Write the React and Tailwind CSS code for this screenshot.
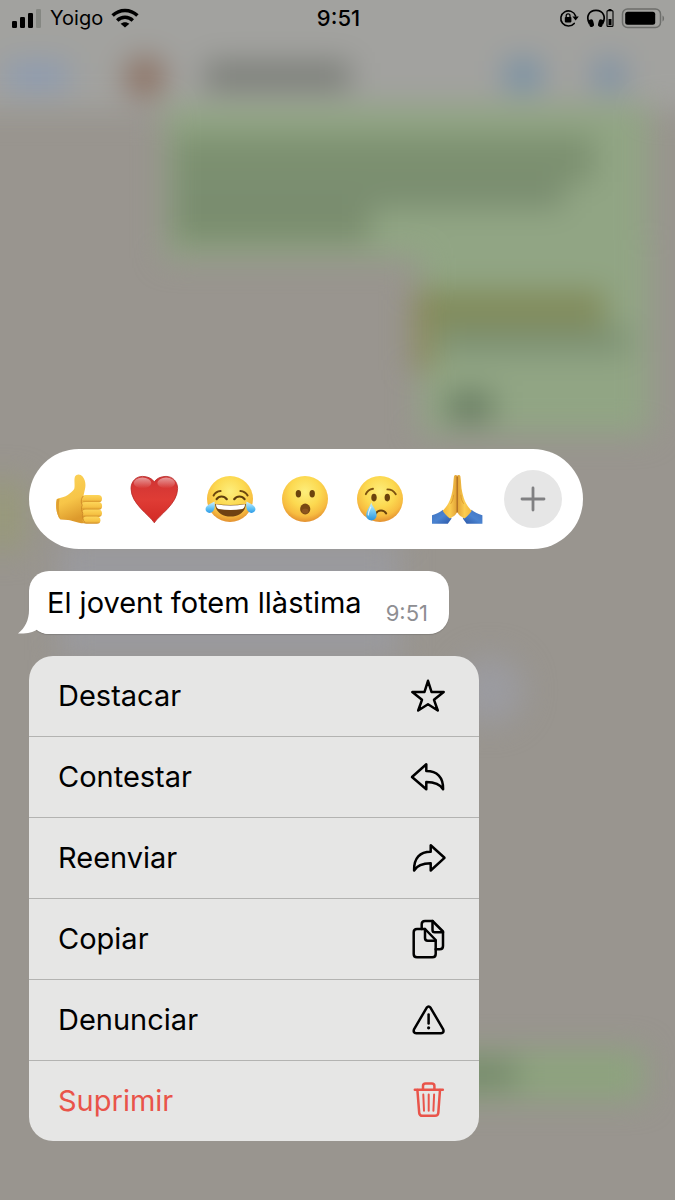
import React from 'react'

const line = {
  fill: 'none',
  stroke: 'currentColor',
  strokeWidth: 2.5,
  strokeLinecap: 'round',
  strokeLinejoin: 'round'
}

function MenuIcon({children}) {
  return <svg viewBox="0 0 40 40" className="h-10 w-10 shrink-0" aria-hidden="true" {...line}>{children}</svg>
}

const actions = [
  {
    label: 'Destacar',
    icon: <path d="M20 4.8L23.5 15.9L35.7 16L26 23.8L29.8 34.5L20 28.3L10.200 34.5L14 23.8L4.300 16L16.5 15.9Z" />
  },
  {
    label: 'Contestar',
    icon: <path d="M4 20L18.3 7.3V14C29 14 35.4 20 35.1 32.3C32 27 27 25 18.3 25V32.3Z" />
  },
  {
    label: 'Reenviar',
    icon: <path d="M36.5 19.8L22.7 7.3V13.8C12 13.8 5.8 20 6.100 32.5C9 27.5 14 25.3 22.7 25.3V32.5Z" />
  },
  {
    label: 'Copiar',
    icon: <>
      <path d="M17 10H9Q5.7 10 5.7 13.3V35Q5.7 38.3 9 38.3H24.4Q27.7 38.3 27.7 35V21Z" />
      <path d="M17 10V19Q17 21.7 19.7 21.7H27.7" />
      <path d="M13.7 10V5.3Q13.7 2 17 2H24.5L35 12.5V27Q35 30.3 31.7 30.3H27.7" />
      <path d="M24.5 2V11Q24.5 13.3 26.8 13.3H35" />
    </>
  },
  {
    label: 'Denunciar',
    icon: <>
      <path d="M18.6 7.8Q20.6 5 22.6 7.8L35.2 29.4Q36.4 33 33 33.2H8.2Q4.8 33 6 29.4Z" />
      <path d="M20.6 14.5V23.5" />
      <circle cx="20.6" cy="27.8" r="1.6" fill="currentColor" stroke="none" />
    </>
  },
  {
    label: 'Suprimir',
    danger: true,
    icon: <>
      <path d="M6.8 8.8H34.8" />
      <path d="M15 8.6V5Q15 2.6 17.6 2.6H23.8Q26.4 2.6 26.4 5V8.6" />
      <path d="M9.4 9L11.2 31.8Q11.5 34.8 14.5 34.8H27Q30 34.8 30.3 31.8L32 9" />
      <path d="M15.3 13.6L16 29.8M20.7 13.6V29.8M26.1 13.6L25.4 29.8" strokeWidth="2" />
    </>
  }
]

function FaceGradient({id}) {
  return <radialGradient id={id} cx="0.5" cy="0.34" r="0.66">
    <stop offset="0" stopColor="#fdee7c" />
    <stop offset="0.5" stopColor="#fcd950" />
    <stop offset="0.8" stopColor="#f7bc40" />
    <stop offset="1" stopColor="#e39030" />
  </radialGradient>
}

function Face({id, children}) {
  return <>
    <defs><FaceGradient id={id} /></defs>
    <circle cx="27" cy="27" r="23" fill={`url(#${id})`} />
    {children}
  </>
}

function ThumbsUp() {
  return <>
    <defs>
      <linearGradient id="thumb" x1="0" y1="0" x2="0.3" y2="1">
        <stop offset="0" stopColor="#fcd45a" />
        <stop offset="0.6" stopColor="#f7c548" />
        <stop offset="1" stopColor="#dd9a2c" />
      </linearGradient>
      <linearGradient id="finger" x1="0" y1="0" x2="0" y2="1">
        <stop offset="0" stopColor="#fdd65a" />
        <stop offset="0.65" stopColor="#f6c143" />
        <stop offset="1" stopColor="#cf8a24" />
      </linearGradient>
    </defs>
    <path d="M23 4.5C24.5 1.8 28.5 1.8 30.6 4.500C33.400 8 34 12.5 33 17L31.5 23.5L37 26V50L31.5 51.3C25 51 21 48.3 16 47.9L8.5 47.6C4.6 43.5 3.2 34 4.8 27.2C6 25.3 12 26.5 18 21.2C20 19.4 22 18 22.4 16.2C23 12 21.800 7.5 23 4.5Z" fill="url(#thumb)" />
    <path d="M4.8 27.2C3.2 34 4.6 43.5 8.5 47.6C6.8 41 6.4 33 7.5 26.7Z" fill="#e0a030" />
    <rect x="30" y="23" width="20" height="7.6" rx="3.8" fill="url(#finger)" />
    <rect x="29.5" y="30" width="20.6" height="7.9" rx="3.9" fill="url(#finger)" />
    <rect x="30" y="37.4" width="20" height="7.7" rx="3.8" fill="url(#finger)" />
    <rect x="30.8" y="44.6" width="17.6" height="7.2" rx="3.6" fill="url(#finger)" />
    <path d="M31.3 24C28.6 27 29 31 30.2 33C29 36 29.4 39 30.8 41C30 44 30.6 48 33 50.8" fill="none" stroke="#d08c28" strokeWidth="1" />
  </>
}

function Heart() {
  return <>
    <defs>
      <linearGradient id="heart" x1="0" y1="0" x2="0" y2="1">
        <stop offset="0" stopColor="#cf3434" />
        <stop offset="0.5" stopColor="#df3c35" />
        <stop offset="1" stopColor="#d22a25" />
      </linearGradient>
      <linearGradient id="shine" x1="0" y1="0" x2="0" y2="1">
        <stop offset="0" stopColor="#ffffff" stopOpacity="0.5" />
        <stop offset="1" stopColor="#ffffff" stopOpacity="0" />
      </linearGradient>
    </defs>
    <path d="M27.300 50.8C23 43.5 4 32 4 16.5C4 9.500 9 4.400 15.500 4.400C20.800 4.400 25.300 6.500 27.300 10C29.300 6.500 33.800 4.400 39 4.400C45.600 4.400 50.600 9.500 50.600 16.500C50.600 32 31.600 43.500 27.300 50.800Z" fill="url(#heart)" stroke="#b82724" strokeWidth="0.8" />
    <ellipse cx="15.5" cy="11" rx="8.8" ry="5.4" fill="url(#shine)" />
    <ellipse cx="39.2" cy="11" rx="8.8" ry="5.4" fill="url(#shine)" />
  </>
}

function Joy() {
  return <>
    <defs>
      <linearGradient id="joyTear" x1="0" y1="0" x2="0" y2="1">
        <stop offset="0" stopColor="#d6f3ff" />
        <stop offset="0.6" stopColor="#62c3f5" />
        <stop offset="1" stopColor="#2f9be6" />
      </linearGradient>
    </defs>
    <Face id="joy">
      <path d="M13.6 27.2C16 23.6 21 23.6 23.8 27.2M31.2 27.2C34 23.6 39 23.6 41.6 27.2" fill="none" stroke="#5f3d0d" strokeWidth="2.2" strokeLinecap="round" />
      <path d="M10.6 23.500C12 20.8 14.800 19.200 17.6 19M37.4 19C40.2 19.200 43 20.800 44.600 23.500" fill="none" stroke="#6f480e" strokeWidth="2" strokeLinecap="round" />
      <path d="M12.2 32Q27.5 34.2 42.8 32C42.5 39.5 36.5 44.600 27.5 44.600C18.5 44.600 12.6 39.500 12.2 32Z" fill="#6f4212" />
      <path d="M13 32.2Q27.5 34.6 42 32.2C42 34.5 41.2 36.2 39.4 37Q27.5 38.800 15.6 37C13.8 36.2 13 34.5 13 32.2Z" fill="#fff" />
    </Face>
    <path d="M11.5 29.4C11.9 33 12.4 38 8.6 40.3C5.8 42 2.2 40 2.6 36.8C3 33 8 31.5 11.5 29.4Z" fill="url(#joyTear)" />
    <path d="M43.5 29.4C43.1 33 42.6 38 46.4 40.3C49.2 42 52.8 40 52.4 36.8C52 33 47 31.5 43.5 29.4Z" fill="url(#joyTear)" />
  </>
}

function Surprised() {
  return <Face id="surprised">
    <ellipse cx="20.4" cy="21.8" rx="2.7" ry="3.7" fill="#6b430c" />
    <ellipse cx="34.2" cy="21.8" rx="2.7" ry="3.7" fill="#6b430c" />
    <ellipse cx="27.2" cy="37" rx="5.1" ry="5.4" fill="#794812" />
    <ellipse cx="27.2" cy="39" rx="3.2" ry="2.6" fill="#8d5520" />
  </Face>
}

function Crying() {
  return <>
    <defs>
      <linearGradient id="cryTear" x1="0" y1="0" x2="0" y2="1">
        <stop offset="0" stopColor="#c9efff" />
        <stop offset="0.5" stopColor="#72c9f4" />
        <stop offset="1" stopColor="#2b93dd" />
      </linearGradient>
    </defs>
    <Face id="crying">
      <ellipse cx="21" cy="25.6" rx="2.7" ry="3.8" fill="#6b430c" />
      <ellipse cx="34.3" cy="25.6" rx="2.7" ry="3.8" fill="#6b430c" />
      <path d="M12.8 22.2C14 19.4 16.6 17.3 20 16.8M34.4 17.4C38.2 17.4 41 19.2 42.8 22.2" fill="none" stroke="#7d5210" strokeWidth="1.9" strokeLinecap="round" />
      <path d="M23 41.4C25 37.4 31 37.4 33.2 41.4" fill="none" stroke="#6b430c" strokeWidth="2" strokeLinecap="round" />
    </Face>
    <path d="M18.2 30.6C19.6 35 23.6 38.4 23.6 43C23.6 46.2 21.2 48.4 18.4 48.4C15.6 48.4 13.2 46.2 13.2 43C13.2 38.4 17 35 18.2 30.6Z" fill="url(#cryTear)" />
    <path d="M17.8 35C16.4 38 15 40.4 15.4 43" fill="none" stroke="#fff" strokeWidth="1.2" strokeLinecap="round" opacity="0.75" />
  </>
}

function PrayingHalf() {
  return <>
    <path d="M3 43.2C7 42 11 40.4 14 37.8L22.6 46.4L18.8 51.8H3Z" fill="url(#sleeve)" />
    <path d="M28.2 3.8C27.6 2.6 25.6 2.6 25 4.2C24.2 9 24.4 15 23.2 20C22 25 21.2 28 19.4 31.2C17.6 34.6 15.8 36.6 13.6 38.8C15.6 41.8 18.4 44.8 21 46.6C23 45 26.4 44 28.2 40Z" fill="url(#palm)" />
    <path d="M24.6 22.8C24.4 26.8 23.4 29.4 21.6 31.8" fill="none" stroke="#dd9b2c" strokeWidth="0.9" />
  </>
}

function Praying() {
  return <>
    <defs>
      <linearGradient id="palm" x1="0" y1="0" x2="1" y2="0">
        <stop offset="0" stopColor="#f3b63a" />
        <stop offset="0.5" stopColor="#fbcd50" />
        <stop offset="1" stopColor="#e0a035" />
      </linearGradient>
      <linearGradient id="sleeve" x1="0" y1="0" x2="1" y2="1">
        <stop offset="0" stopColor="#3f72c0" />
        <stop offset="0.500" stopColor="#4a83d0" />
        <stop offset="1" stopColor="#2b57a8" />
      </linearGradient>
    </defs>
    <PrayingHalf />
    <g transform="translate(56.4 0) scale(-1 1)"><PrayingHalf /></g>
    <path d="M28.2 4.5V40.5" stroke="#a8651c" strokeWidth="1.2" />
  </>
}

const reactions = [
  {name: 'M’agrada', drawing: <ThumbsUp />},
  {name: 'Cor', drawing: <Heart />},
  {name: 'Riure', drawing: <Joy />},
  {name: 'Sorpresa', drawing: <Surprised />},
  {name: 'Plor', drawing: <Crying />},
  {name: 'Gràcies', drawing: <Praying />}
]

// the dimmed, out of focus conversation behind the menu
function Backdrop() {
  return <svg className="absolute inset-0 -z-10 h-full w-full" viewBox="0 0 675 1200" preserveAspectRatio="none" aria-hidden="true">
    <defs>
      <filter id="soft" x="-20%" y="-20%" width="140%" height="140%" colorInterpolationFilters="sRGB">
        <feGaussianBlur stdDeviation="15" />
      </filter>
    </defs>
    <rect width="675" height="1200" fill="#99958f" />
    <g filter="url(#soft)">
      <rect x="-60" y="-60" width="795" height="170" fill="#a2a29f" />
      <rect x="165" y="104" width="484" height="154" fill="#91a584" />
      <rect x="420" y="240" width="230" height="194" fill="#91a584" />
      <rect x="174" y="136" width="420" height="46" fill="#7c9070" />
      <rect x="174" y="180" width="390" height="28" fill="#7a8d70" />
      <rect x="174" y="206" width="196" height="36" fill="#7a8d6e" />
      <rect x="414" y="290" width="20" height="80" fill="#8a8a58" />
      <rect x="430" y="290" width="175" height="38" fill="#828c5c" />
      <rect x="440" y="328" width="190" height="26" fill="#7d9174" />
      <rect x="448" y="392" width="44" height="30" fill="#687c62" />
      <rect x="5" y="62" width="64" height="28" fill="#8c9bb2" />
      <circle cx="145" cy="77" r="20" fill="#8c6f60" />
      <rect x="205" y="62" width="145" height="28" fill="#7a7d77" />
      <rect x="505" y="60" width="36" height="30" fill="#7590a6" />
      <rect x="594" y="60" width="30" height="30" fill="#7a90a6" />
      <rect x="-20" y="480" width="46" height="70" fill="#98997b" />
      <rect x="60" y="540" width="340" height="120" fill="#9a9a9e" />
      <circle cx="490" cy="690" r="34" fill="#9b9ba0" />
      <rect x="400" y="1050" width="244" height="50" fill="#8da37e" />
      <rect x="440" y="1060" width="76" height="28" fill="#74896a" />
    </g>
  </svg>
}

function StatusBar() {
  return <header className="grid h-9 grid-cols-[1fr_auto_1fr] items-center pl-3 pr-[10px]">
    <div className="flex items-center gap-2">
      <svg viewBox="0 0 30 20" className="h-5 w-[30px]" aria-label="Cobertura">
        <rect x="0" y="13" width="5" height="7" rx="1.2" />
        <rect x="8" y="9" width="5" height="11" rx="1.2" />
        <rect x="16" y="5" width="5" height="15" rx="1.2" />
        <rect x="24" y="1" width="5" height="19" rx="1.2" fill="#858782" />
      </svg>
      <span className="text-[20px] leading-6">Yoigo</span>
      <svg viewBox="0 0 28 20" className="h-5 w-7" fill="none" stroke="#000" strokeWidth="3.5" aria-label="Wi-Fi">
        <path d="M1.6 7.6C8.6 0.8 19.4 0.8 26.4 7.6" />
        <path d="M6.2 12.4C10.6 8.2 17.4 8.2 21.8 12.4" />
        <path d="M14 19.6L9.6 15.8C12 13.6 16 13.6 18.4 15.8Z" fill="#000" stroke="none" />
      </svg>
    </div>
    <time className="text-[22px] font-medium leading-6">9:51</time>
    <div className="flex items-center justify-end gap-[7px]">
      <svg viewBox="0 0 20 20" className="h-5 w-5" aria-label="Rotació bloquejada">
        <path d="M16.6 8A7.6 7.6 0 1 0 15.2 15.4" fill="none" stroke="#000" strokeWidth="1.6" strokeLinecap="round" />
        <path d="M13.4 8.4H19.8L16.6 12.6Z" />
        <rect x="5.8" y="9" width="6.6" height="5.4" rx="0.8" />
        <path d="M7.2 9V7.8A1.9 1.9 0 0 1 11 7.8V9" fill="none" stroke="#000" strokeWidth="1.3" />
      </svg>
      <svg viewBox="0 0 28 20" className="h-5 w-7" aria-label="Auriculars">
        <path d="M3.600 16C-0.400 9 2.600 2.400 10 2.400C17.400 2.400 20.400 9 16.400 16" fill="none" stroke="#000" strokeWidth="1.7" />
        <rect x="3" y="11.500" width="4.600" height="7.500" rx="2" transform="rotate(-14 5 15)" />
        <rect x="12.400" y="11.500" width="4.600" height="7.500" rx="2" transform="rotate(14 15 15)" />
        <rect x="21" y="2.600" width="6" height="15.800" rx="1" fill="none" stroke="#000" strokeWidth="1.1" />
        <rect x="22.5" y="1" width="3" height="1.6" />
        <rect x="22.5" y="11" width="3" height="6" />
      </svg>
      <svg viewBox="0 0 44 22" className="h-[22px] w-11" aria-label="Bateria">
        <rect x="1.5" y="2" width="38" height="18.5" rx="5" fill="none" stroke="#6d6e6b" strokeWidth="1.5" />
        <rect x="4.2" y="4.8" width="30" height="13" rx="2.5" />
        <path d="M41.5 8.5V14.500C43.600 13.500 43.600 9.500 41.5 8.5Z" fill="#6d6e6b" />
      </svg>
    </div>
  </header>
}

export default function App() {
  return <div className="relative isolate flex min-h-screen flex-col overflow-hidden font-['Inter','Liberation_Sans',sans-serif] text-black">
    <Backdrop />
    <StatusBar />
    <main className="mt-auto flex flex-col items-start gap-[22px] px-[29px] pb-[59px]">
      <div className="flex h-[100px] w-full max-w-[554px] items-center justify-between rounded-full bg-white pl-[23px] pr-[21px]">
        {reactions.map(({name, drawing}) => <button key={name} aria-label={name}>
          <svg viewBox="0 0 54 54" className="block h-[54px] w-[54px]" aria-hidden="true">{drawing}</svg>
        </button>)}
        <button aria-label="Més reaccions" className="flex h-[58px] w-[58px] items-center justify-center rounded-full bg-[#e6e6e6] text-[#808082]">
          <svg viewBox="0 0 26 26" className="h-[26px] w-[26px]" fill="none" stroke="currentColor" strokeWidth="2.8" strokeLinecap="round" aria-hidden="true">
            <path d="M13 2V24M2 13H24" />
          </svg>
        </button>
      </div>
      <div className="relative flex h-[63px] items-center rounded-[20px] bg-white pl-[18px] pr-[21px] shadow-[0_1px_1px_rgba(0,0,0,0.15)]">
        <svg viewBox="0 0 32 34" className="absolute -left-[11px] bottom-0 h-[34px] w-8" aria-hidden="true">
          <path d="M11 0V10C11 20 7 28 0 33.5C8 34 15 32.5 19 29.5C22 32 27 34 32 34V0Z" fill="#fff" />
        </svg>
        <p className="relative text-[29px] leading-9">El jovent fotem llàstima</p>
        <time className="relative ml-6 mt-5 text-[22px] leading-6 text-[#8e8e92]">9:51</time>
      </div>
      <ul className="w-full max-w-[450px] divide-y divide-[#b3b3b1] overflow-hidden rounded-[24px] bg-[#e6e6e5]">
        {actions.map(({label, icon, danger}) => <li key={label}>
          <button className={`flex h-20 w-full items-center justify-between pl-[29px] pr-[31px] text-[29px] leading-9 ${danger ? 'text-[#e9544a]' : ''}`}>
            {label}
            <MenuIcon>{icon}</MenuIcon>
          </button>
        </li>)}
      </ul>
    </main>
  </div>
}
